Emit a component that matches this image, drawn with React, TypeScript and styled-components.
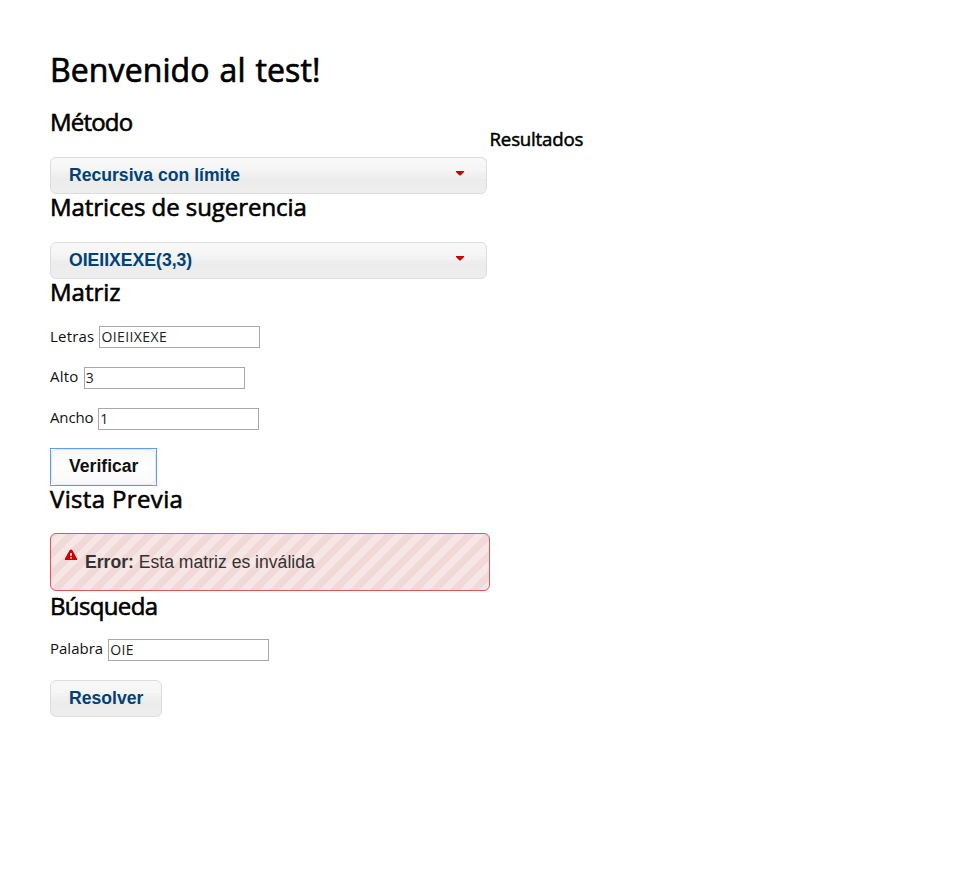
import React from "react";
import styled, { createGlobalStyle } from "styled-components";

const Global = createGlobalStyle`
  * { box-sizing: border-box; }
  body { margin: 0; background: #fff; color: #000; font-family: "Trebuchet MS", "Open Sans", sans-serif; }
`;
const Page = styled.main`padding: 50px 0 0 50px; width: 979px; height: 896px; overflow: hidden;`;
const Title = styled.h1`
  margin: 0; height: 57px; line-height: 40px; font-size: 32px; font-weight: 400; white-space: nowrap;
  letter-spacing: 0.1px; word-spacing: 1.5px; -webkit-text-stroke: 0.7px #000;
`;
const Columns = styled.div`display: flex; align-items: flex-start;`;
const Left = styled.div`width: 440px; flex: none;`;
const Heading = styled.h2<{ $spacing?: number; $height?: number }>`
  margin: 0; height: ${(p) => p.$height ?? 49}px; line-height: 30px; font-size: 24px; font-weight: 400;
  white-space: nowrap; letter-spacing: ${(p) => p.$spacing ?? 0}px; -webkit-text-stroke: 0.6px #000;
`;
const Results = styled.h3`
  margin: 20px 0 0 -0.5px; line-height: 24px; font-size: 18.7px; font-weight: 400;
  letter-spacing: -0.2px; -webkit-text-stroke: 0.5px #000;
`;
const Button = styled.button`
  display: block; height: 37px; padding: 0 18px; border: 1px solid #dddddd; border-radius: 6px;
  background: linear-gradient(#f8f8f8 0%, #f6f6f6 30%, #ececec 60%, #eeeeee 100%);
  color: #004276; font: bold 17.6px/35px "Liberation Sans", sans-serif; text-align: left; white-space: nowrap;
`;
const Select = styled(Button)`
  display: flex; align-items: center; justify-content: space-between; width: 437px; margin-bottom: -2px;
`;
const Caret = styled.svg`width: 8px; height: 5px; margin: -4px 4px 0 0;`;
const FocusRing = styled.div`
  width: 107px; height: 38px; margin: -1px 0 -2px; border: 1px solid #5c9df5;
`;
const Verify = styled(Button)`
  width: 105px; height: 36px; padding: 0 17px 2px; border-color: #e8e8e8; line-height: 32px;
  background: linear-gradient(#f8f8f8, #fff 50%, #f8f8f8); color: #111;
`;
const Field = styled.label<{ $spacing?: number; $lift?: number }>`
  display: flex; align-items: center; gap: 5px; height: 22px; margin-bottom: 19px;
  font-size: 15px; line-height: 20px; color: #111;
  & > span { margin-top: ${(p) => p.$lift ?? -4}px; letter-spacing: ${(p) => p.$spacing ?? 0}px; }
`;
const Input = styled.input`
  width: 161px; height: 22px; padding: 0 1px 1px; border: 1px solid #a9a9a9;
  font: 14px "Open Sans", sans-serif; letter-spacing: 0.4px; color: #222; background: #fff;
`;
const Alert = styled.div`
  display: flex; height: 58px; width: 440px; padding: 15px 14px; border: 1px solid #e0565b; border-radius: 6px;
  background: repeating-linear-gradient(135deg, #f1d9d8 0 3.54px, #f7e6e6 3.54px 10.61px, #f1d9d8 10.61px 14.14px);
  color: #333; font: 17.6px/27px "Liberation Sans", sans-serif;
`;
const Warning = styled.svg`width: 12px; height: 12px; margin-right: 8px;`;

const Arrow = () => <Caret viewBox="0 0 8 5"><path d="M0 0h8v1L4.5 4.5h-1L0 1z" fill="#cc0000" /></Caret>;

export default function App() {
  return (
    <Page>
      <Global />
      <Title>Benvenido al test!</Title>
      <Columns>
        <Left>
          <Heading $spacing={-0.8} $height={50}>Método</Heading>
          <Select>Recursiva con límite<Arrow /></Select>
          <Heading $spacing={-0.05} $height={50}>Matrices de sugerencia</Heading>
          <Select>OIEIIXEXE(3,3)<Arrow /></Select>
          <Heading>Matriz</Heading>
          <Field $spacing={0.2} $lift={-2}><span>Letras</span><Input defaultValue="OIEIIXEXE" /></Field>
          <Field $spacing={0.25}><span>Alto</span><Input defaultValue="3" /></Field>
          <Field $spacing={-0.15}><span>Ancho</span><Input defaultValue="1" /></Field>
          <FocusRing><Verify>Verificar</Verify></FocusRing>
          <Heading $spacing={0.35}>Vista Previa</Heading>
          <Alert>
            <Warning viewBox="0 0 12 12">
              <path d="M4.5 1.5Q5 .5 6 .5t1.5 1L12 9.5v1.5H0V9.5z" fill="#cc0000" />
              <path d="M5.2 4h1.6v3H5.2zM5.2 8h1.6v1.6H5.2z" fill="#fff" />
            </Warning>
            <span><b>Error:</b> Esta matriz es inválida</span>
          </Alert>
          <Heading $spacing={-0.65} $height={48}>Búsqueda</Heading>
          <Field><span>Palabra</span><Input defaultValue="OIE" /></Field>
          <Button>Resolver</Button>
        </Left>
        <Results>Resultados</Results>
      </Columns>
    </Page>
  );
}
